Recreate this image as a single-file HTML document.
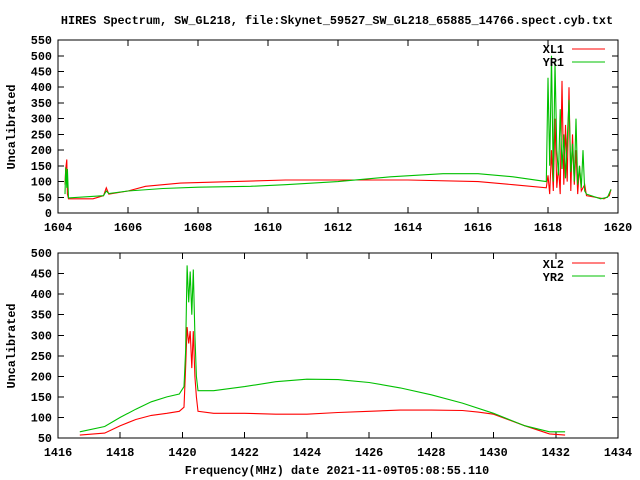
<!DOCTYPE html>
<html><head><meta charset="utf-8"><style>
html,body{margin:0;padding:0;background:#fff;width:640px;height:480px;overflow:hidden}
svg text{font-family:"Liberation Mono",monospace;font-weight:bold;font-size:11.8px;fill:#000}
</style></head><body>
<svg id="s" width="640" height="480" xmlns="http://www.w3.org/2000/svg" shape-rendering="crispEdges">
<rect width="640" height="480" fill="#fff"/>
<text x="337" y="24" text-anchor="middle">HIRES Spectrum, SW_GL218, file:Skynet_59527_SW_GL218_65885_14766.spect.cyb.txt</text>
<text transform="translate(15,127) rotate(-90)" text-anchor="middle">Uncalibrated</text>
<text transform="translate(15,346) rotate(-90)" text-anchor="middle">Uncalibrated</text>
<text x="337" y="474" text-anchor="middle">Frequency(MHz) date 2021-11-09T05:08:55.110</text>
<g id="g"></g>
</svg>
<script>
var g=document.getElementById('g'),NS='http://www.w3.org/2000/svg';
function el(n,a,t){var e=document.createElementNS(NS,n);for(var k in a)e.setAttribute(k,a[k]);if(t)e.textContent=t;g.appendChild(e);return e;}
function axes(L,R,T,B,xs,xmap,ys,ymap){
 el('rect',{x:L,y:T,width:R-L,height:B-T,fill:'none',stroke:'#000','stroke-width':1});
 xs.forEach(function(v){var x=xmap(v);el('line',{x1:x,y1:B,x2:x,y2:B-6,stroke:'#000'});el('line',{x1:x,y1:T,x2:x,y2:T+6,stroke:'#000'});el('text',{x:x,y:B+18,'text-anchor':'middle'},String(v));});
 ys.forEach(function(v){var y=ymap(v);el('line',{x1:L,y1:y,x2:L+6,y2:y,stroke:'#000'});el('line',{x1:R,y1:y,x2:R-6,y2:y,stroke:'#000'});el('text',{x:L-6,y:y+4,'text-anchor':'end'},String(v));});
}
function line(d,xmap,ymap,c){var p=d.map(function(q){return xmap(q[0]).toFixed(1)+','+ymap(q[1]).toFixed(1)}).join(' ');el('polyline',{points:p,fill:'none',stroke:c,'stroke-width':1.1,'shape-rendering':'auto'});}
var tx=function(f){return 58+(f-1604)*35},ty=function(v){return 213-v*0.3145};
var xs=[],ys=[];for(var i=1604;i<=1620;i+=2)xs.push(i);for(i=0;i<=550;i+=50)ys.push(i);
axes(58,618,40,213,xs,tx,ys,ty);
var redT=[[1604.2,90],[1604.22,140],[1604.25,170],[1604.27,60],[1604.3,45],[1605,45],[1605.3,55],[1605.38,80],[1605.45,60],[1606,70],[1606.5,85],[1607.5,95],[1609,100],[1610.5,105],[1614,105],[1616,100],[1617,90],[1617.95,80],[1618.0,120],[1618.05,60],[1618.1,200],[1618.15,70],[1618.2,300],[1618.25,80],[1618.3,150],[1618.35,60],[1618.4,420],[1618.45,90],[1618.5,280],[1618.55,100],[1618.6,400],[1618.65,70],[1618.7,250],[1618.75,90],[1618.8,200],[1618.85,60],[1618.9,150],[1618.95,70],[1619.05,90],[1619.1,55],[1619.6,45],[1619.75,55],[1619.8,75]];
var grnT=[[1604.2,60],[1604.22,145],[1604.25,80],[1604.27,140],[1604.3,48],[1605.3,55],[1605.38,70],[1605.45,62],[1606,70],[1607,78],[1608,82],[1609.5,85],[1610.5,90],[1612,100],[1613.5,115],[1615,125],[1616,125],[1617,115],[1617.95,100],[1618.0,430],[1618.05,150],[1618.1,500],[1618.15,100],[1618.2,480],[1618.25,200],[1618.3,120],[1618.35,330],[1618.4,140],[1618.45,250],[1618.5,110],[1618.6,360],[1618.65,130],[1618.7,220],[1618.75,100],[1618.8,300],[1618.85,90],[1618.9,150],[1618.95,80],[1619.0,200],[1619.05,70],[1619.1,60],[1619.5,45],[1619.7,50],[1619.8,75]];
line(redT,tx,ty,'#ff0000');line(grnT,tx,ty,'#00c000');
el('text',{x:564,y:53,'text-anchor':'end'},'XL1');el('line',{x1:572,y1:49,x2:605,y2:49,stroke:'#ff0000'});
el('text',{x:564,y:66,'text-anchor':'end'},'YR1');el('line',{x1:572,y1:62,x2:605,y2:62,stroke:'#00c000'});
var bx=function(f){return 58+(f-1416)*31.11},by=function(v){return 438-(v-50)*0.411};
xs=[];ys=[];for(i=1416;i<=1434;i+=2)xs.push(i);for(i=50;i<=500;i+=50)ys.push(i);
axes(58,618,253,438,xs,bx,ys,by);
var grnB=[[1416.7,65],[1417.5,78],[1418,100],[1418.5,120],[1419,138],[1419.5,150],[1419.9,157],[1420.05,175],[1420.1,260],[1420.15,470],[1420.2,380],[1420.25,455],[1420.3,350],[1420.35,460],[1420.4,300],[1420.45,200],[1420.5,165],[1421,165],[1422,175],[1423,187],[1424,193],[1425,192],[1426,185],[1427,172],[1428,155],[1429,135],[1430,110],[1431,80],[1431.8,65],[1432.3,65]];
var redB=[[1416.7,57],[1417.5,62],[1418,80],[1418.5,95],[1419,105],[1419.5,110],[1419.9,115],[1420.05,125],[1420.1,220],[1420.15,320],[1420.2,280],[1420.25,310],[1420.3,220],[1420.35,310],[1420.4,200],[1420.45,150],[1420.5,115],[1421,110],[1422,110],[1423,108],[1424,108],[1425,112],[1426,115],[1427,118],[1428,118],[1429,117],[1429.5,113],[1430,108],[1431,80],[1431.8,60],[1432.3,57]];
line(redB,bx,by,'#ff0000');line(grnB,bx,by,'#00c000');
el('text',{x:564,y:268,'text-anchor':'end'},'XL2');el('line',{x1:572,y1:263,x2:605,y2:263,stroke:'#ff0000'});
el('text',{x:564,y:281,'text-anchor':'end'},'YR2');el('line',{x1:572,y1:276,x2:605,y2:276,stroke:'#00c000'});
</script>
</body></html>
